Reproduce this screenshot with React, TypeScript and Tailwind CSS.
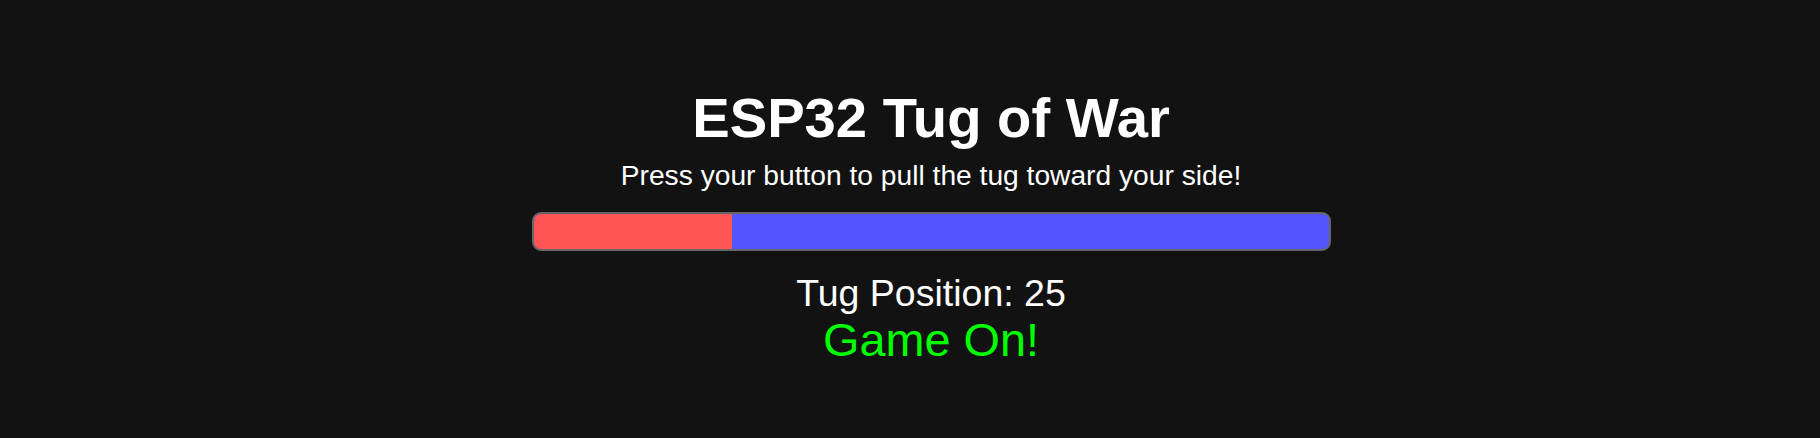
export default function App() {
  const pos = 25;
  return (
    <div
      className="w-full h-[438px] bg-[#121212] text-white text-center pl-[42px] pt-[86px]"
      style={{ fontFamily: '"Liberation Sans", Arial, sans-serif' }}
    >
      <h1 className="text-[56.2px] leading-[64px] font-bold">ESP32 Tug of War</h1>
      <p className="mt-[9px] text-[28.2px] leading-[32px]">
        Press your button to pull the tug toward your side!
      </p>
      <div className="mx-auto mt-[21px] w-[799px] h-[39px] border-2 border-[#666666] rounded-[9px] bg-[#5555ff] overflow-hidden flex">
        <div className="h-full bg-[#ff5555]" style={{ width: `${pos}%` }} />
      </div>
      <div className="mt-[21px] text-[37.5px] leading-[42px]">Tug Position: {pos}</div>
      <div className="text-[46.8px] leading-[53px] text-[#00ff00]">Game On!</div>
    </div>
  );
}
